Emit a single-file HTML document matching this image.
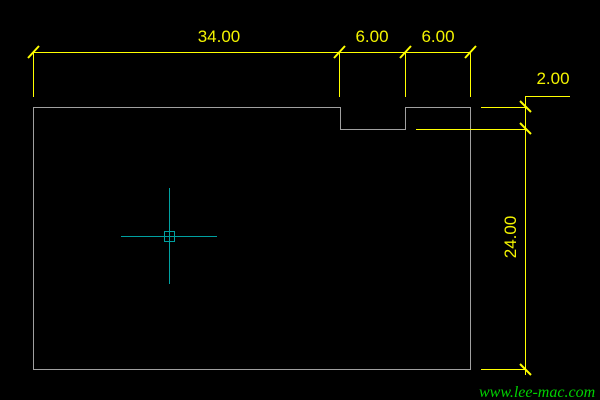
<!DOCTYPE html>
<html><head><style>
html,body{margin:0;padding:0;background:#000;width:600px;height:400px;overflow:hidden}
</style></head><body>
<svg width="600" height="400" xmlns="http://www.w3.org/2000/svg" style="display:block">
<rect width="600" height="400" fill="#000"/>
<g fill="none" stroke="#a0a0a0" stroke-width="1" shape-rendering="crispEdges">
<path d="M33.5 107.5 H340.5 V129.5 H405.5 V107.5 H470.5 V369.5 H33.5 Z"/>
</g>
<g fill="none" stroke="#00a0a0" stroke-width="1" shape-rendering="crispEdges">
<path d="M169.5 188 V284 M121 236.5 H217"/>
<rect x="164.5" y="231.5" width="10" height="10"/>
</g>
<g fill="none" stroke="#ffff00" stroke-width="1" shape-rendering="crispEdges">
<path d="M33.5 52.5 H470.5"/>
<path d="M33.5 52 V97 M339.5 52 V97 M405.5 52 V97 M470.5 52 V97"/>
<path d="M525.5 96 V375 M525 96.5 H570"/>
<path d="M481 107.5 H526 M416 129.5 H526 M481 369.5 H526"/>
</g>
<g stroke="#ffff00" stroke-width="2">
<path d="M28 58 L39 46 M334 58 L345 46 M400 58 L411 46 M465 58 L476 46"/>
<path d="M520 101 L531 112 M520 123 L531 134 M520 364 L531 375"/>
</g>
<g fill="#f4f400" font-family="Liberation Sans, sans-serif" font-size="17">
<text x="219" y="42" text-anchor="middle">34.00</text>
<text x="372" y="42" text-anchor="middle">6.00</text>
<text x="438" y="42" text-anchor="middle">6.00</text>
<text x="553" y="84" text-anchor="middle">2.00</text>
<text transform="translate(516,237) rotate(-90)" text-anchor="middle">24.00</text>
</g>
<text x="479" y="397" fill="#00d000" font-family="Liberation Serif, serif" font-style="italic" font-size="16">www.lee-mac.com</text>
</svg>
</body></html>
